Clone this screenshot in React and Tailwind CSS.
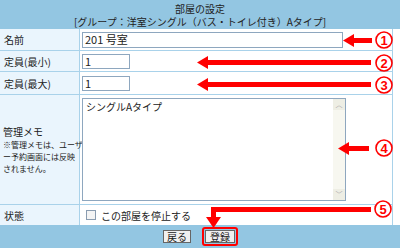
import React from "react";

const font = { fontFamily: '"Noto Sans CJK JP", "Noto Sans", sans-serif' };

function Circled({ cx, cy, n }) {
  return (
    <g>
      <circle cx={cx} cy={cy} r="8" fill="#fff" stroke="#ff0000" strokeWidth="1.6" />
      <text x={cx} y={cy + 4.5} textAnchor="middle" fontSize="13" fontWeight="900" fill="#ff0000" fontFamily="Liberation Sans, Arial, sans-serif">{n}</text>
    </g>
  );
}

function LeftArrow({ tip, end, y }) {
  return (
    <g fill="#ff0000">
      <polygon points={`${tip},${y} ${tip + 11},${y - 6.5} ${tip + 11},${y + 6.5}`} />
      <rect x={tip + 10} y={y - 2.5} width={end - tip - 10} height="5" />
    </g>
  );
}

export default function App() {
  return (
    <div className="relative w-[400px] h-[248px] overflow-hidden bg-white text-[#222]" style={font}>
      <div className="h-[29px] bg-[#93c6e2] flex flex-col items-center justify-center text-[10px] leading-[13px] text-[#222]">
        <div>部屋の設定</div>
        <div>[グループ：洋室シングル（バス・トイレ付き）Aタイプ]</div>
      </div>
      <div className="w-[393px] border-r border-[#a9d2ea] text-[10px]">
        <div className="flex h-[22px] border-b border-[#a9d2ea]">
          <div className="w-[80px] bg-[#eaf5fd] border-r border-[#a9d2ea] flex items-center pl-[4px]">名前</div>
          <div className="flex-1 flex items-center pl-[2px]">
            <div className="w-[261px] h-[16px] border border-[#8ea7bf] flex items-center pl-[2px] text-[11px]">201 号室</div>
          </div>
        </div>
        <div className="flex h-[21px] border-b border-[#a9d2ea]">
          <div className="w-[80px] bg-[#eaf5fd] border-r border-[#a9d2ea] flex items-center pl-[4px]">定員(最小)</div>
          <div className="flex-1 flex items-center pl-[2px]">
            <div className="w-[48px] h-[15px] border border-[#8ea7bf] flex items-center pl-[2px] text-[11px]">1</div>
          </div>
        </div>
        <div className="flex h-[23px] border-b border-[#a9d2ea]">
          <div className="w-[80px] bg-[#eaf5fd] border-r border-[#a9d2ea] flex items-center pl-[4px]">定員(最大)</div>
          <div className="flex-1 flex items-center pl-[2px]">
            <div className="w-[48px] h-[15px] border border-[#8ea7bf] flex items-center pl-[2px] text-[11px]">1</div>
          </div>
        </div>
        <div className="flex h-[110px] border-b border-[#a9d2ea]">
          <div className="w-[80px] bg-[#eaf5fd] border-r border-[#a9d2ea] flex flex-col justify-center pl-[3px] whitespace-nowrap">
            <div className="text-[10px] leading-[14px]">管理メモ</div>
            <div className="text-[8px] leading-[12px]">※管理メモは、ユーザ<br />ー予約画面には反映<br />されません。</div>
          </div>
          <div className="flex-1 flex items-center pl-[2px]">
            <div className="w-[264px] h-[103px] border border-[#8ea7bf] flex">
              <div className="flex-1 pl-[3px] pt-[1px] text-[10px] leading-[14px]">シングルAタイプ</div>
              <div className="w-[12px] bg-[#f7f7f0] flex flex-col justify-between">
                <div className="h-[11px] bg-[#eeeee4] flex items-center justify-center text-[7px] text-[#aaa]">︿</div>
                <div className="h-[11px] bg-[#eeeee4] flex items-center justify-center text-[7px] text-[#aaa]">﹀</div>
              </div>
            </div>
          </div>
        </div>
        <div className="flex h-[20px]">
          <div className="w-[80px] bg-[#eaf5fd] border-r border-[#a9d2ea] flex items-center pl-[4px]">状態</div>
          <div className="flex-1 flex items-center pl-[6px] gap-[5px]">
            <div className="w-[10px] h-[10px] border border-[#8a9cb0] bg-[#f4f4f4]"></div>
            <span>この部屋を停止する</span>
          </div>
        </div>
      </div>
      <div className="h-[23px] bg-[#93c6e2] flex items-center justify-center gap-[11px] pl-[1px]">
        <div className="h-[13px] px-[3px] border border-[#666] bg-[#f0f0f0] text-[10px] leading-[11px] flex items-center">戻る</div>
        <div className="rounded-[3px] border-2 border-[#ff0000] p-[1px]">
          <div className="h-[13px] px-[4px] border border-[#666] bg-[#f0f0f0] text-[10px] leading-[11px] flex items-center">登録</div>
        </div>
      </div>
      <svg className="absolute left-0 top-0" width="400" height="248">
        <LeftArrow tip={343} end={372} y={40.5} />
        <LeftArrow tip={197} end={371} y={62.5} />
        <LeftArrow tip={197} end={371} y={84.5} />
        <LeftArrow tip={338} end={369} y={148.5} />
        <g fill="#ff0000">
          <rect x="211" y="207" width="160" height="5" />
          <rect x="211" y="207" width="5" height="12" />
          <polygon points="206,217 221,217 213.5,228" />
        </g>
        <Circled cx={384} cy={40} n="1" />
        <Circled cx={384} cy={63} n="2" />
        <Circled cx={384} cy={85} n="3" />
        <Circled cx={384} cy={148} n="4" />
        <Circled cx={383} cy={209} n="5" />
      </svg>
    </div>
  );
}
